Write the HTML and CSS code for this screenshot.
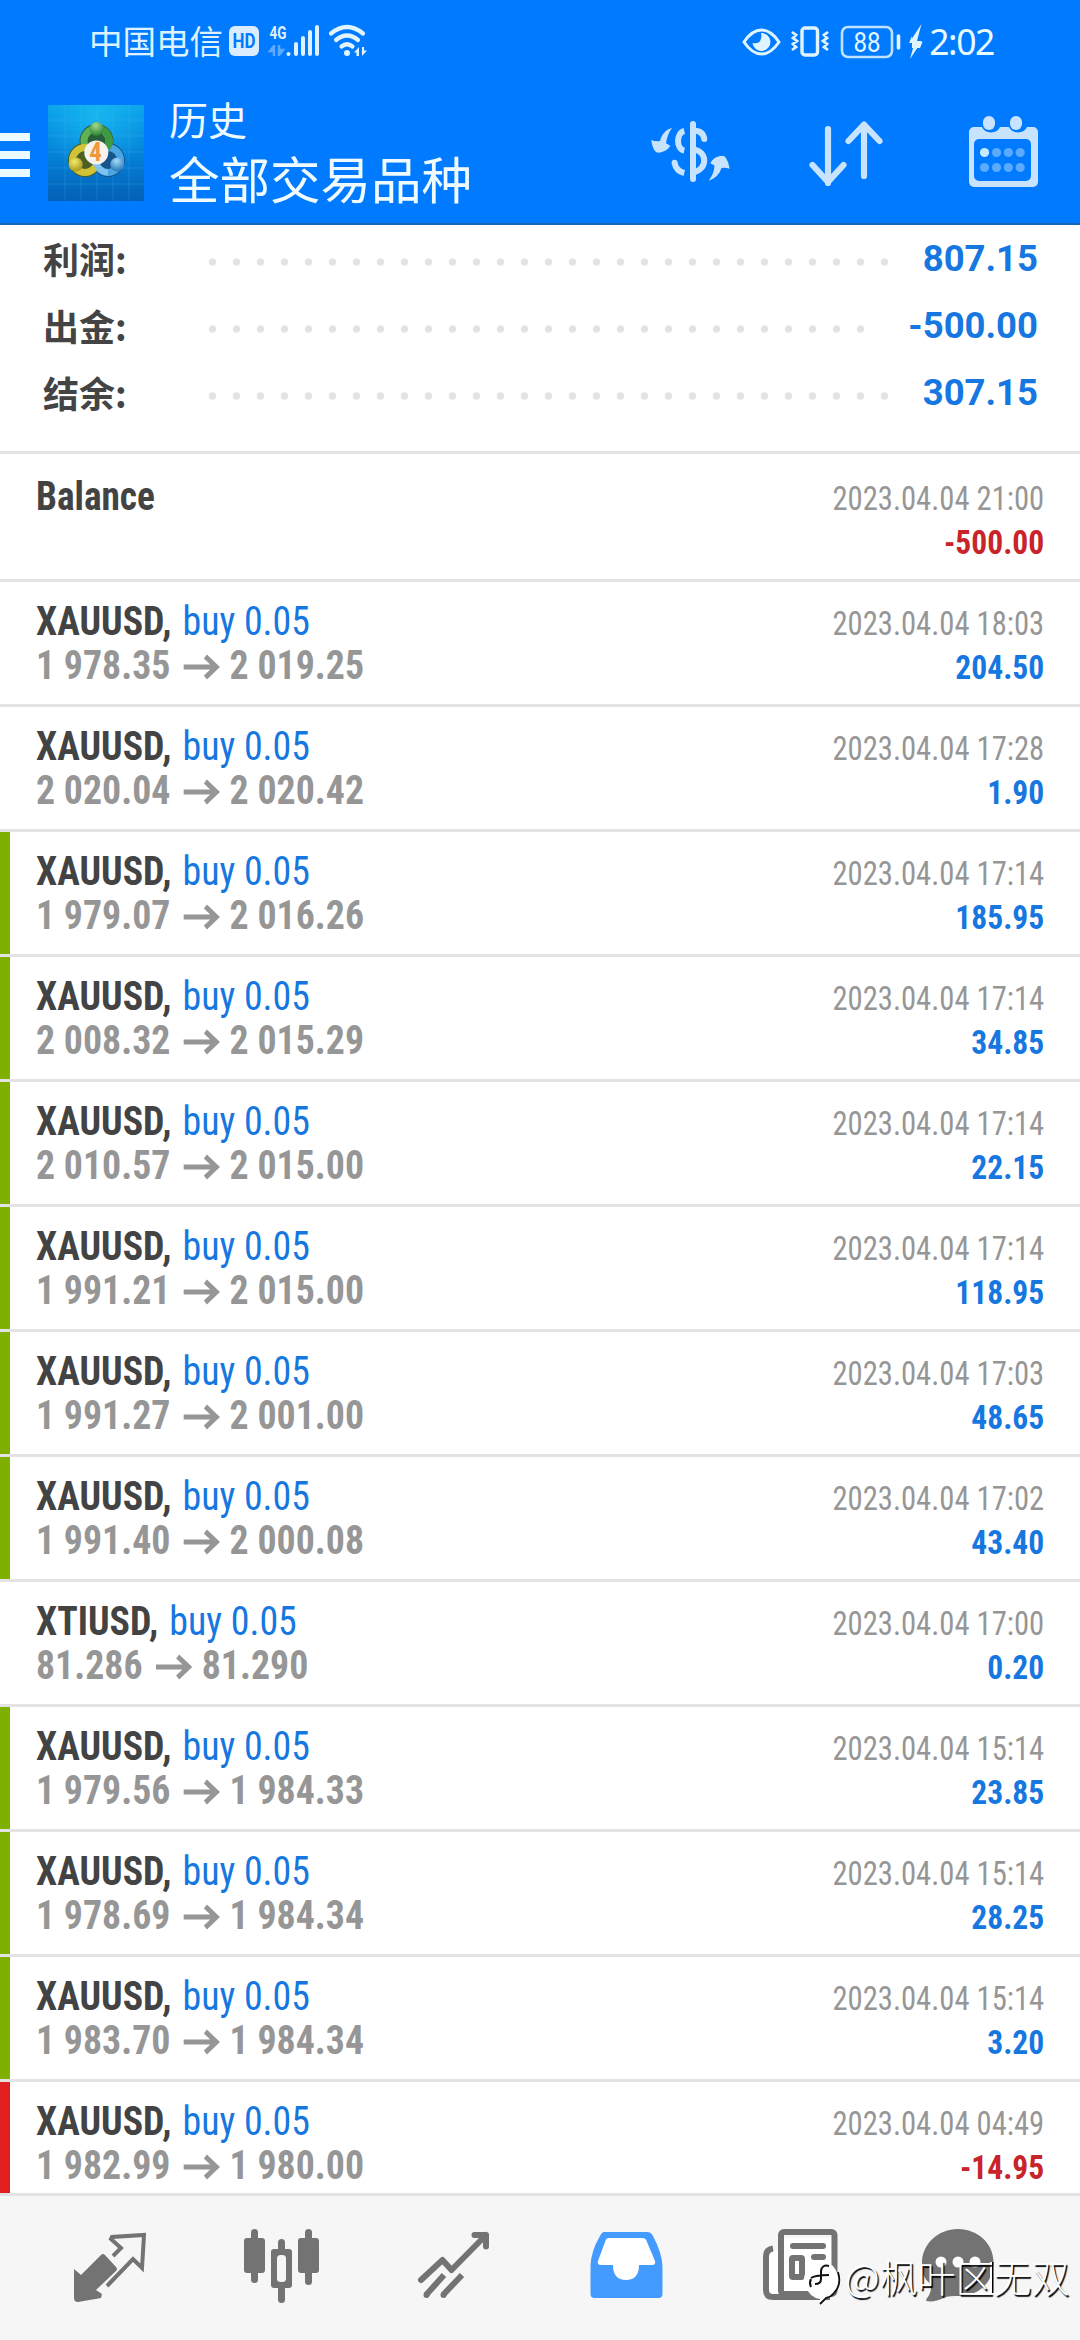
FILE: index.html
```
<!DOCTYPE html>
<html lang="zh-CN">
<head>
<meta charset="utf-8">
<title>历史</title>
<link rel="stylesheet" href="styles.css">
</head>
<body>
<div class="app">
  <header class="top">
    <div class="status">
      <div class="status-left">
        <span class="carrier">中国电信</span>
        <svg class="status-net" width="140" height="36" viewBox="0 0 140 36">
          <rect x="0" y="2" width="30" height="30" rx="6" fill="#dcecff"/>
          <text x="15" y="24" class="hd" textLength="23" lengthAdjust="spacingAndGlyphs">HD</text>
          <text x="49" y="14.500" class="g4" textLength="17" lengthAdjust="spacingAndGlyphs">4G</text>
          <path d="M45 21v11M45 22l-4 5h4M50 32V21M50 31l4-5h-4" stroke="#5aabff" stroke-width="2.500" fill="none"/>
          <path d="M59.500 30v0M67 30v-10M74 30V14M81 30V8M88 30V3" stroke="#dff0ff" stroke-width="4" stroke-linecap="round" fill="none"/>
          <path d="M102 9.500q16-13 32 0M107 16q11-9 22 0M112.500 22.500q5.500-4.500 11 0" stroke="#e2f4ff" stroke-width="4.200" stroke-linecap="round" fill="none"/>
          <circle cx="118" cy="29" r="3" fill="#e2f4ff"/>
          <path d="M130 23v9h-2.500v-3.500H125zM133 32v-9h2v3.500h3z" fill="#e2f4ff"/>
        </svg>
      </div>
      <div class="status-right">
        <svg width="182" height="38" viewBox="0 0 182 38">
          <path d="M2 18Q10 6 19.500 6T37 18Q29 30 19.500 30T2 18z" fill="none" stroke="#dff4ff" stroke-width="3"/>
          <path d="M19 9a9 9 0 1 1-8.500 10Q17 20 18.500 16T19 9z" fill="#dff4ff"/>
          <rect x="60" y="4" width="15.500" height="27" rx="3" fill="none" stroke="#dff4ff" stroke-width="3.400"/>
          <path d="M50 8l4 3-3 3 4 3-4 3 3 3-4 3M86 8l-4 3 3 3-4 3 4 3-3 3 4 3" fill="none" stroke="#dff4ff" stroke-width="2.800"/>
          <rect x="100" y="3" width="50" height="30" rx="6" fill="none" stroke="#bfe3ff" stroke-width="2.600"/>
          <text x="125" y="27.500" class="batt" textLength="27" lengthAdjust="spacingAndGlyphs">88</text>
          <path d="M156.500 12v12" stroke="#dff4ff" stroke-width="3.600" stroke-linecap="round"/>
          <path d="M179.500 0L167 19h5.500L168 35l12-18h-5z" fill="#dff4ff"/>
          <path d="M170 12l-2.500 6h13l-2.500 6h-8z" fill="#dff4ff"/>
        </svg>
        <span class="clock">2:02</span>
      </div>
    </div>
    <div class="bar">
      <div class="menu"><i></i><i></i><i></i></div>
      <svg class="logo" width="96" height="96" viewBox="0 0 96 96">
        <defs>
          <linearGradient id="sky" x1="0" y1="0" x2="0" y2="1"><stop offset="0" stop-color="#0aa0ea"/><stop offset=".55" stop-color="#057fd6"/><stop offset="1" stop-color="#0360b6"/></linearGradient>
          <radialGradient id="glow" cx=".5" cy=".1" r=".6"><stop offset="0" stop-color="#1cc0f4" stop-opacity=".7"/><stop offset="1" stop-color="#1cc0f4" stop-opacity="0"/></radialGradient>
          <radialGradient id="gr" cx=".45" cy=".25" r=".8"><stop offset="0" stop-color="#a5d98b"/><stop offset="1" stop-color="#1f7a2c"/></radialGradient>
          <radialGradient id="ye" cx=".4" cy=".3" r=".8"><stop offset="0" stop-color="#f3ea6a"/><stop offset="1" stop-color="#a08d12"/></radialGradient>
          <radialGradient id="bl" cx=".45" cy=".25" r=".8"><stop offset="0" stop-color="#a4dcf8"/><stop offset="1" stop-color="#1a6fb4"/></radialGradient>
        </defs>
        <rect width="96" height="96" fill="url(#sky)"/>
        <rect width="96" height="96" fill="url(#glow)"/>
        <path d="M17 0v96M33 0v96M49 0v96M65 0v96M81 0v96M0 15h96M0 31h96M0 47h96M0 63h96M0 79h96" stroke="#55bdf0" stroke-opacity=".22" fill="none"/>
        <circle cx="37" cy="55" r="17" fill="#4c5f24"/>
        <circle cx="60" cy="55" r="17" fill="#16548c"/>
        <circle cx="48.500" cy="36" r="17" fill="#275f38"/>
        <circle cx="48.500" cy="36" r="12.500" fill="none" stroke="#5fb254" stroke-width="7"/>
        <circle cx="60" cy="55" r="12.500" fill="none" stroke="#4aa5e2" stroke-width="7"/>
        <circle cx="37" cy="55" r="12.500" fill="none" stroke="#d0c436" stroke-width="7"/>
        <path d="M48.500 23.500A12.500 12.500 0 0 1 59 43" fill="none" stroke="#3f9a45" stroke-width="7"/>
        <path d="M48 55A12.500 12.500 0 0 0 60 67.500" fill="none" stroke="#7cc4ef" stroke-width="6"/>
        <circle cx="48.500" cy="24" r="7" fill="url(#gr)"/>
        <circle cx="27.700" cy="59.500" r="7" fill="url(#ye)"/>
        <circle cx="69.300" cy="59.500" r="7" fill="url(#bl)"/>
        <circle cx="48.300" cy="47.500" r="12" fill="#f6f3ef"/>
        <text x="47.500" y="56" class="four">4</text>
      </svg>
      <div class="titles">
        <div class="t1">历史</div>
        <div class="t2">全部交易品种</div>
      </div>
      <svg class="tools" width="400" height="80" viewBox="0 0 400 80">
        <g fill="none" stroke="#c8e3fd">
          <path d="M43 9v55" stroke-width="6" stroke-linecap="round"/>
          <path d="M34.300 16C26 18 26 34 34.300 35.500M24.600 48Q26 56 34.300 58M43 15.500Q53 15.500 54.300 24M43 34.500C58 36 58 54.500 43 57.500" stroke-width="6"/>
          <path d="M54.300 24v0M24.600 47.800v0" stroke-width="6" stroke-linecap="round"/>
          <path d="M178 14v54M162.500 50l15.500 17 15.500-17M214 61V11M198.500 26L214 9.500 229.500 26" stroke-width="6.200" stroke-linecap="round" stroke-linejoin="round"/>
        </g>
        <path d="M22 13Q14 15 11 22.700L10 26Q6 27 1.300 25 2 32 5 36 7 39 12 37 18 35 20.300 30.700L16 28.300Q17 20 22 13zM58.600 65.700Q64 59 64.500 50.500L60.300 48.300Q63 43 69 41.300 74 39.500 76 43 79 48 79.600 53.700 75 52 71.500 53 69 62 58.600 65.700z" fill="#c8e3fd"/>
        <path fill-rule="evenodd" fill="#c8e3fd" d="M323 12h9a9.500 8 0 0 0 18 0h9a9.500 8 0 0 0 18 0h6a5 5 0 0 1 5 5v50a5 5 0 0 1-5 5h-59a5 5 0 0 1-5-5V17a5 5 0 0 1 5-5zM329 24a5 5 0 0 0-5 5v32a5 5 0 0 0 5 5h47a5 5 0 0 0 5-5V29a5 5 0 0 0-5-5z"/>
        <rect x="333" y="1" width="12" height="14" rx="6" fill="#c8e3fd"/><rect x="360" y="1" width="12" height="14" rx="6" fill="#c8e3fd"/>
        <circle cx="334.500" cy="37.500" r="4.600" fill="#c8eaff"/>
        <g fill="#5aabff"><circle cx="346.500" cy="37.500" r="4.600"/><circle cx="358.300" cy="37.500" r="4.600"/><circle cx="370.200" cy="37.500" r="4.600"/><circle cx="334.500" cy="52.500" r="4.600"/><circle cx="346.500" cy="52.500" r="4.600"/><circle cx="358.300" cy="52.500" r="4.600"/><circle cx="370.200" cy="52.500" r="4.600"/></g>
      </svg>
    </div>
  </header>

  <section class="summary">
    <div class="sum"><span class="lbl">利润:</span><span class="dots"></span><span class="amt">807.15</span></div>
    <div class="sum"><span class="lbl">出金:</span><span class="dots"></span><span class="amt">-500.00</span></div>
    <div class="sum"><span class="lbl">结余:</span><span class="dots"></span><span class="amt">307.15</span></div>
  </section>

  <main class="list" id="list">
    <div class="row balance"><div class="l"><div class="sym"><b>Balance</b></div></div><div class="r"><div class="date">2023.04.04 21:00</div><div class="val neg">-500.00</div></div></div>
  </main>

  <nav class="tabs">
    <svg width="1080" height="144" viewBox="0 0 1080 144">
      <g fill="#737373">
        <path d="M74 73l7 6 20-20q2-2 4 0l11 12q2 2 0 4L96 94l6 4-1 4-23 4q-4 0-4-4z"/>
        <path fill="none" stroke="#737373" stroke-width="4" d="M113 60l8-8-10-9 1-2 32-2-2 33-9-9-26 27"/>
        <rect x="244" y="42" width="21" height="35" rx="3"/><rect x="251" y="33" width="7" height="54" rx="3.500"/>
        <rect x="298" y="42" width="21" height="35" rx="3"/><rect x="305" y="33" width="7" height="56" rx="3.500"/>
        <rect x="278" y="43" width="7" height="64" rx="3.500"/><rect x="271" y="53" width="21" height="39" rx="3"/>
        <rect x="277" y="59" width="9" height="27" rx="3.500" fill="#f6f6f6"/>
        <path fill="none" stroke="#737373" stroke-width="6" stroke-linecap="round" stroke-linejoin="round" d="M421 84l21.500-20 9 10L486 39M474.500 39H486v11.500"/>
        <path fill="none" stroke="#737373" stroke-width="6" d="M426 99l18-20M443 99l19-20"/><circle cx="426.500" cy="99" r="3"/><circle cx="443.500" cy="99" r="3"/>
      </g>
      <path fill="#449bff" d="M604 36h43q4 0 6 4 9 17 9.500 30v28q0 4-4 4h-64q-4 0-4-4V70q.5-15 9.500-30 2-4 4-4z"/>
      <path fill="#fff" d="M609 42h33q4 0 5 4l8 19q1 4-3 4h-13q0 15-13 15t-13-15h-12q-4 0-3-4l7-19q1-4 4-4z"/>
      <g fill="none" stroke="#737373" stroke-width="6" stroke-linecap="round">
        <path fill="#fff" stroke="none" d="M768 54h10v48h-10zM784 42h47v53h-47z"/>
        <rect x="781" y="36" width="53.500" height="62" rx="3"/>
        <path stroke-linecap="butt" d="M773 52.500q-7 1-7 8V94q0 7 7 7h57"/>
        <path d="M793 50h30M814 61h9"/><rect x="792" y="62" width="10" height="19" rx="1"/>
      </g>
      <path fill="#737373" d="M958 33c20 0 35.500 15 35.500 33 0 20-14 34-35 34-5 0-11 0-15 2-6 3-12 4-17 3-1-1 0-2 2-5 3-5 3-9 1-13C924 83 922 76 922 67 922 48 938 33 958 33z"/>
      <g fill="#fff"><circle cx="941" cy="66" r="5.500"/><circle cx="958" cy="66" r="5.500"/><circle cx="975" cy="66" r="5.500"/></g>
    </svg>
  </nav>
  <div class="mark">
    <svg width="40" height="46" viewBox="0 0 40 46"><path d="M2 20Q4 10 9 10 8 1 15 3q5-1 6 3 6-2 10 2 6 7 5 17-1 13-13 16l-5 6v-6Q4 39 2 20z" fill="#fff"/><path d="M36 14q4 13-4 21-3 4-8 5l-6 6" fill="none" stroke="#111" stroke-width="1.800"/><path d="M27 8q-7-2-8 5v8q0 5-6 5M9 20q5-3 18-3M9 21q-2 4 0 8" fill="none" stroke="#111" stroke-width="2"/></svg>
    <span>@枫叶<span class="boxed">区</span>无双</span>
  </div>
</div>
<script src="list.js"></script>
</body>
</html>
```
FILE: list.js
```
const trades = [
  ["XAUUSD", "1 978.35", "2 019.25", "18:03", "204.50", ""],
  ["XAUUSD", "2 020.04", "2 020.42", "17:28", "1.90", ""],
  ["XAUUSD", "1 979.07", "2 016.26", "17:14", "185.95", "tp"],
  ["XAUUSD", "2 008.32", "2 015.29", "17:14", "34.85", "tp"],
  ["XAUUSD", "2 010.57", "2 015.00", "17:14", "22.15", "tp"],
  ["XAUUSD", "1 991.21", "2 015.00", "17:14", "118.95", "tp"],
  ["XAUUSD", "1 991.27", "2 001.00", "17:03", "48.65", "tp"],
  ["XAUUSD", "1 991.40", "2 000.08", "17:02", "43.40", "tp"],
  ["XTIUSD", "81.286", "81.290", "17:00", "0.20", ""],
  ["XAUUSD", "1 979.56", "1 984.33", "15:14", "23.85", "tp"],
  ["XAUUSD", "1 978.69", "1 984.34", "15:14", "28.25", "tp"],
  ["XAUUSD", "1 983.70", "1 984.34", "15:14", "3.20", "tp"],
  ["XAUUSD", "1 982.99", "1 980.00", "04:49", "-14.95", "sl"]
];
const arrow = '<svg class="arrow" width="38" height="24" viewBox="0 0 38 24"><path d="M0 12h35M23.500 1.500L35.500 12 23.500 22.500" fill="none" stroke="#969696" stroke-width="5"/></svg>';
document.getElementById("list").insertAdjacentHTML("beforeend", trades.map(([s, from, to, time, val, hit]) =>
  `<div class="row ${hit}"><div class="l"><div class="sym"><b>${s},</b> <span>buy 0.05</span></div><div class="price">${from}${arrow}${to}</div></div>` +
  `<div class="r"><div class="date">2023.04.04 ${time}</div><div class="val ${val[0] === "-" ? "neg" : ""}">${val}</div></div></div>`
).join(""));
```
FILE: styles.css
```
* { box-sizing: border-box; }
body { margin: 0; background: #fff; font-family: Roboto, "Noto Sans CJK SC", sans-serif; }
svg { display: block; flex: none; overflow: visible; }
.app { position: relative; width: 1080px; height: 2340px; overflow: hidden; display: flex; flex-direction: column; }
.top { height: 225px; flex: none; background: #007aff; border-bottom: 2px solid #1a66b8; color: #f0fbff; }
.status { height: 84px; display: flex; justify-content: space-between; padding: 0 86px 0 89px; }
.status-left, .status-right { display: flex; align-items: flex-start; padding-top: 24px; }
.carrier { margin-top: -2px; font: 33.500px/36px "Noto Sans CJK SC", sans-serif; color: #dcf2ff; }
.status-net { margin-left: 6px; }
.hd { font: 700 20px Roboto, sans-serif; fill: #007aff; text-anchor: middle; }
.g4 { font: 700 18px Roboto, sans-serif; fill: #dff0ff; text-anchor: middle; }
.batt { font: 27px Roboto, sans-serif; fill: #e4f7ff; text-anchor: middle; }
.four { font: 700 25px Roboto, sans-serif; font-stretch: 75%; fill: #f0963c; text-anchor: middle; }
.clock { margin: -1px 0 0 5px; font: 35.500px/36px "Noto Sans", sans-serif; letter-spacing: -1.400px; color: #e8fbff; }
.bar { height: 139px; display: flex; align-items: flex-start; }
.menu { width: 30px; margin: 49px 18px 0 0; display: flex; flex-direction: column; gap: 10px; }
.menu i { height: 8px; background: #eafcff; }
.logo { margin-top: 21px; }
.titles { margin: 11px 0 0 25px; width: 481px; font-family: "Noto Sans CJK SC", sans-serif; }
.t1 { font-size: 39px; line-height: 46px; }
.t2 { font-size: 50.500px; line-height: 73px; }
.tools { margin-top: 31px; }

.summary { height: 226px; flex: none; padding: 0 42px 0 43px; }
.sum { height: 67px; display: flex; align-items: center; }
.lbl { width: 157px; font: 700 36px/67px "Noto Sans CJK SC", sans-serif; color: #444; }
.dots { flex: 1; height: 10px; margin-top: 7px; background: radial-gradient(circle at 12.500px 5px, #e3e3e3 3.300px, transparent 4.200px) 0 0 / 24px 10px repeat-x; }
.amt { margin-left: 32px; font-size: 36.500px; font-weight: 700; line-height: 67px; color: #1777e0; }

.list { flex: none; height: 1742px; overflow: hidden; font-stretch: 75%; }
.row { height: 125px; border-top: 3px solid #e3e3e3; padding: 15px 36px 0 36px; display: flex; justify-content: space-between; }
.balance { height: 128px; padding-top: 18px; }
.tp { box-shadow: inset 10px 0 #7fb000; }
.sl { box-shadow: inset 10px 0 #e01f20; }
.l, .r { white-space: nowrap; line-height: 44px; }
.l > div { transform-origin: 0 0; transform: scaleX(.923); }
.r > div { transform-origin: 100% 0; }
.sym { font-size: 41px; color: #1777e0; height: 44px; line-height: 48px; }
.sym b { color: #434343; }
.sym span { margin-left: 2.500px; }
.l > .price { font-size: 41px; font-weight: 700; color: #969696; line-height: 48px; }
.balance .l > .sym { transform: scaleX(.91); }
.arrow { display: inline-block; margin: 0 12px 0 14px; }
.r { text-align: right; }
.r > .date { font-size: 33px; color: #969696; line-height: 53px; height: 44px; transform: scaleX(.928); }
.r > .val { font-size: 33px; font-weight: 700; color: #1777e0; line-height: 53px; transform: scaleX(.955); }
.r > .val.neg { color: #c8242a; }

.tabs { flex: none; height: 147px; background: #f6f6f6; border-top: 3px solid #e3e3e3; }
.mark { position: absolute; left: 802px; top: 2258px; display: flex; align-items: flex-start; }
.mark > span { margin: -4px 0 0 3px; font: 300 38px/44px "Noto Sans CJK SC", sans-serif; color: #fff; text-shadow: 1.500px 1.500px 1px #000; }
.boxed { background: linear-gradient(#fff, #fff) 34px 58% / 2px 31px no-repeat, linear-gradient(#000, #000) 36px 60% / 1.500px 31px no-repeat; }
```
